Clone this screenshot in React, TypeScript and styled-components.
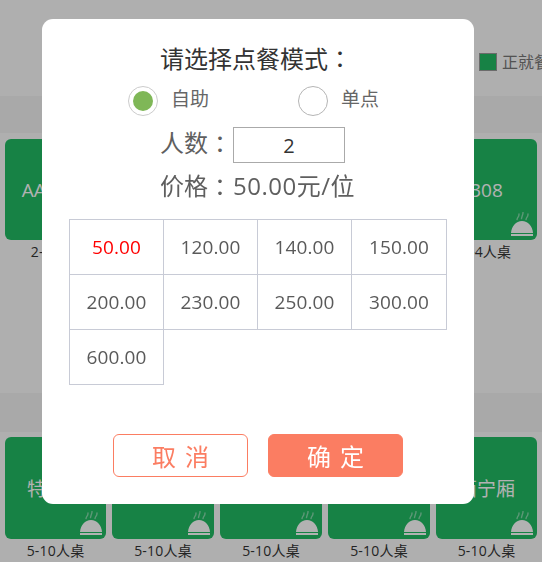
import { createGlobalStyle } from 'styled-components';
import styled from 'styled-components';

const GlobalStyle = createGlobalStyle`
  html, body {
    margin: 0;
    padding: 0;
    height: 100%;
    overflow: hidden;
    background: #fbfbfb;
    font-family: "Open Sans", "Noto Sans CJK SC", sans-serif;
  }
  * { box-sizing: border-box; }
`

const Page = styled.div`
  width: 542px;
  height: 562px;
  overflow: hidden;
`

const TopBar = styled.div`
  height: 96px;
  display: flex;
  justify-content: flex-start;
  align-items: flex-start;
  padding: 53px 0 0 479px;
  white-space: nowrap;
`

const LegendSwatch = styled.span`
  flex: none;
  width: 18px;
  height: 18px;
  background: #21bb64;
  border: 1px solid #9a9a9a;
`

const LegendText = styled.span`
  flex: none;
  margin-left: 5px;
  font-size: 16px;
  line-height: 19px;
  color: #777;
`

const SectionBand = styled.div<{ $gap: number; $height: number }>`
  height: ${p => p.$height}px;
  margin-top: ${p => p.$gap}px;
  background: #f3f3f3;
`

const TableRow = styled.div<{ $top: number }>`
  display: grid;
  grid-template-columns: 101px 102px 102px 102px 101px;
  column-gap: 6px;
  padding: ${p => p.$top}px 5px 0;
`

const TableItem = styled.div`
  display: flex;
  flex-direction: column;
  align-items: stretch;
`

const TableCard = styled.div<{ $height: number }>`
  position: relative;
  height: ${p => p.$height}px;
  border-radius: 6px;
  background: #21bb64;
  display: flex;
  align-items: center;
  justify-content: center;
  color: #fff;
  font-size: 19px;
`

const DishIcon = styled.svg`
  position: absolute;
  right: 4px;
  bottom: 4px;
  width: 22px;
  height: 24px;
`

const TableLabel = styled.div`
  height: 23px;
  text-align: center;
  font-size: 14px;
  line-height: 23px;
  letter-spacing: 0.2px;
  color: #333;
  white-space: nowrap;
`

const Overlay = styled.div`
  position: fixed;
  inset: 0;
  background: rgba(0, 0, 0, 0.3);
  padding: 19px 0 0 42px;
`

const Modal = styled.div`
  width: 432px;
  height: 485px;
  background: #fff;
  border-radius: 11px;
  display: flex;
  flex-direction: column;
  padding-top: 24px;
`

const Title = styled.div`
  height: 34px;
  padding-left: 118px;
  font-size: 24px;
  line-height: 30px;
  color: #333;
  white-space: nowrap;
`

// the colon sits centred in its cell, as in the traditional Chinese forms
const Colon = styled.span`
  font-family: "Noto Sans CJK TC", sans-serif;
`

const RadioRow = styled.div`
  display: flex;
  height: 30px;
  margin-top: 9px;
  padding-left: 86px;
`

const RadioOption = styled.label<{ $width: number }>`
  width: ${p => p.$width}px;
  display: flex;
  align-items: center;
  font-size: 19px;
  line-height: 27px;
  color: #666;
`

const RadioCircle = styled.span<{ $checked?: boolean }>`
  width: 30px;
  height: 30px;
  margin-right: 13px;
  border-radius: 50%;
  border: 1px solid ${p => (p.$checked ? '#ccc' : '#b5b5b5')};
  display: flex;
  align-items: center;
  justify-content: center;

  &::after {
    content: '';
    width: 20px;
    height: 20px;
    border-radius: 50%;
    background: ${p => (p.$checked ? '#7fb757' : 'transparent')};
  }
`

const RadioText = styled.span`
  margin-bottom: 3px;
`

const FieldRow = styled.div`
  display: flex;
  align-items: flex-start;
  height: 36px;
  margin-top: 11px;
  padding-left: 118px;
  font-size: 24px;
  line-height: 32px;
  color: #5f5f5f;
  white-space: nowrap;
`

const CountInput = styled.input`
  width: 112px;
  height: 36px;
  margin-left: 1px;
  border: 1px solid #aaa;
  border-radius: 0;
  outline: none;
  text-align: center;
  font-family: inherit;
  font-size: 20px;
  color: #333;
  background: #fff;
`

const PriceRow = styled(FieldRow)`
  margin-top: 8px;
  line-height: 30px;
`

const PriceValue = styled.span`
  margin-left: 1px;
  letter-spacing: 0.5px;
`

const PriceGrid = styled.div`
  display: grid;
  grid-template-columns: 94px 94px 94px 95px;
  grid-auto-rows: 55px;
  margin: 12px 0 0 27px;
`

const PriceCell = styled.div<{ $active?: boolean }>`
  display: flex;
  align-items: center;
  justify-content: center;
  margin: 0 -1px -1px 0;
  border: 1px solid #c8cbd6;
  font-size: 19px;
  letter-spacing: 0.15px;
  color: ${p => (p.$active ? '#f00' : '#5a5a5a')};
`

const ButtonRow = styled.div`
  display: flex;
  gap: 20px;
  margin-top: 50px;
  padding-left: 71px;
`

const ActionButton = styled.button<{ $primary?: boolean }>`
  width: 135px;
  height: 43px;
  padding: 0;
  border: 1px solid #fb7d62;
  border-radius: 6px;
  background: ${p => (p.$primary ? '#fb7d62' : '#fff')};
  color: ${p => (p.$primary ? '#fff' : '#fb7d62')};
  font-family: inherit;
  font-size: 24px;
  word-spacing: 3px;
  white-space: pre;
  cursor: pointer;
`

const Dish = () => (
  <DishIcon viewBox="0 0 22 24" fill="#fff">
    <g stroke="#fff" strokeWidth="1.4" fill="none" opacity="0.45" strokeLinecap="round">
      <path d="M6 7.500 Q6.500 5.500 7.500 4.500 Q8 3.500 8 2" />
      <path d="M10.500 6.500 Q11 4.500 11.500 3 Q12 2 12 0.500" />
      <path d="M15 7.500 Q15.500 5.500 16.500 4.500 Q17 3.500 17 2" />
    </g>
    <path d="M0 21 C0.500 14 5 9 11 9 C17 9 21.500 14 22 21 Z" />
    <rect x="0" y="22" width="22" height="2" />
  </DishIcon>
)

const topTables = ['AA1012', 'AA1020', 'AA1030', 'AA1050', '308']
const bottomTables = ['特色厢', '锦江厢', '金陵厢', '长安厢', '西宁厢']
const prices = ['50.00', '120.00', '140.00', '150.00', '200.00', '230.00', '250.00', '300.00', '600.00']

const App = () => {
  return (
    <>
      <GlobalStyle />
      <Page>
        <TopBar>
          <LegendSwatch />
          <LegendText>正就餐</LegendText>
        </TopBar>
        <SectionBand $gap={0} $height={37} />
        <TableRow $top={6}>
          {topTables.map(name => (
            <TableItem key={name}>
              <TableCard $height={101}>
                {name}
                <Dish />
              </TableCard>
              <TableLabel>2-4人桌</TableLabel>
            </TableItem>
          ))}
        </TableRow>
        <SectionBand $gap={130} $height={39} />
        <TableRow $top={5}>
          {bottomTables.map(name => (
            <TableItem key={name}>
              <TableCard $height={102}>
                {name}
                <Dish />
              </TableCard>
              <TableLabel>5-10人桌</TableLabel>
            </TableItem>
          ))}
        </TableRow>
      </Page>
      <Overlay>
        <Modal>
          <Title>请选择点餐模式<Colon>：</Colon></Title>
          <RadioRow>
            <RadioOption $width={170}>
              <RadioCircle $checked />
              <RadioText>自助</RadioText>
            </RadioOption>
            <RadioOption $width={90}>
              <RadioCircle />
              <RadioText>单点</RadioText>
            </RadioOption>
          </RadioRow>
          <FieldRow>
            人数<Colon>：</Colon>
            <CountInput defaultValue="2" />
          </FieldRow>
          <PriceRow>
            价格<Colon>：</Colon>
            <PriceValue>50.00元/位</PriceValue>
          </PriceRow>
          <PriceGrid>
            {prices.map((price, i) => (
              <PriceCell key={price} $active={i === 0}>{price}</PriceCell>
            ))}
          </PriceGrid>
          <ButtonRow>
            <ActionButton>取 消</ActionButton>
            <ActionButton $primary>确 定</ActionButton>
          </ButtonRow>
        </Modal>
      </Overlay>
    </>
  )
}

export default App
